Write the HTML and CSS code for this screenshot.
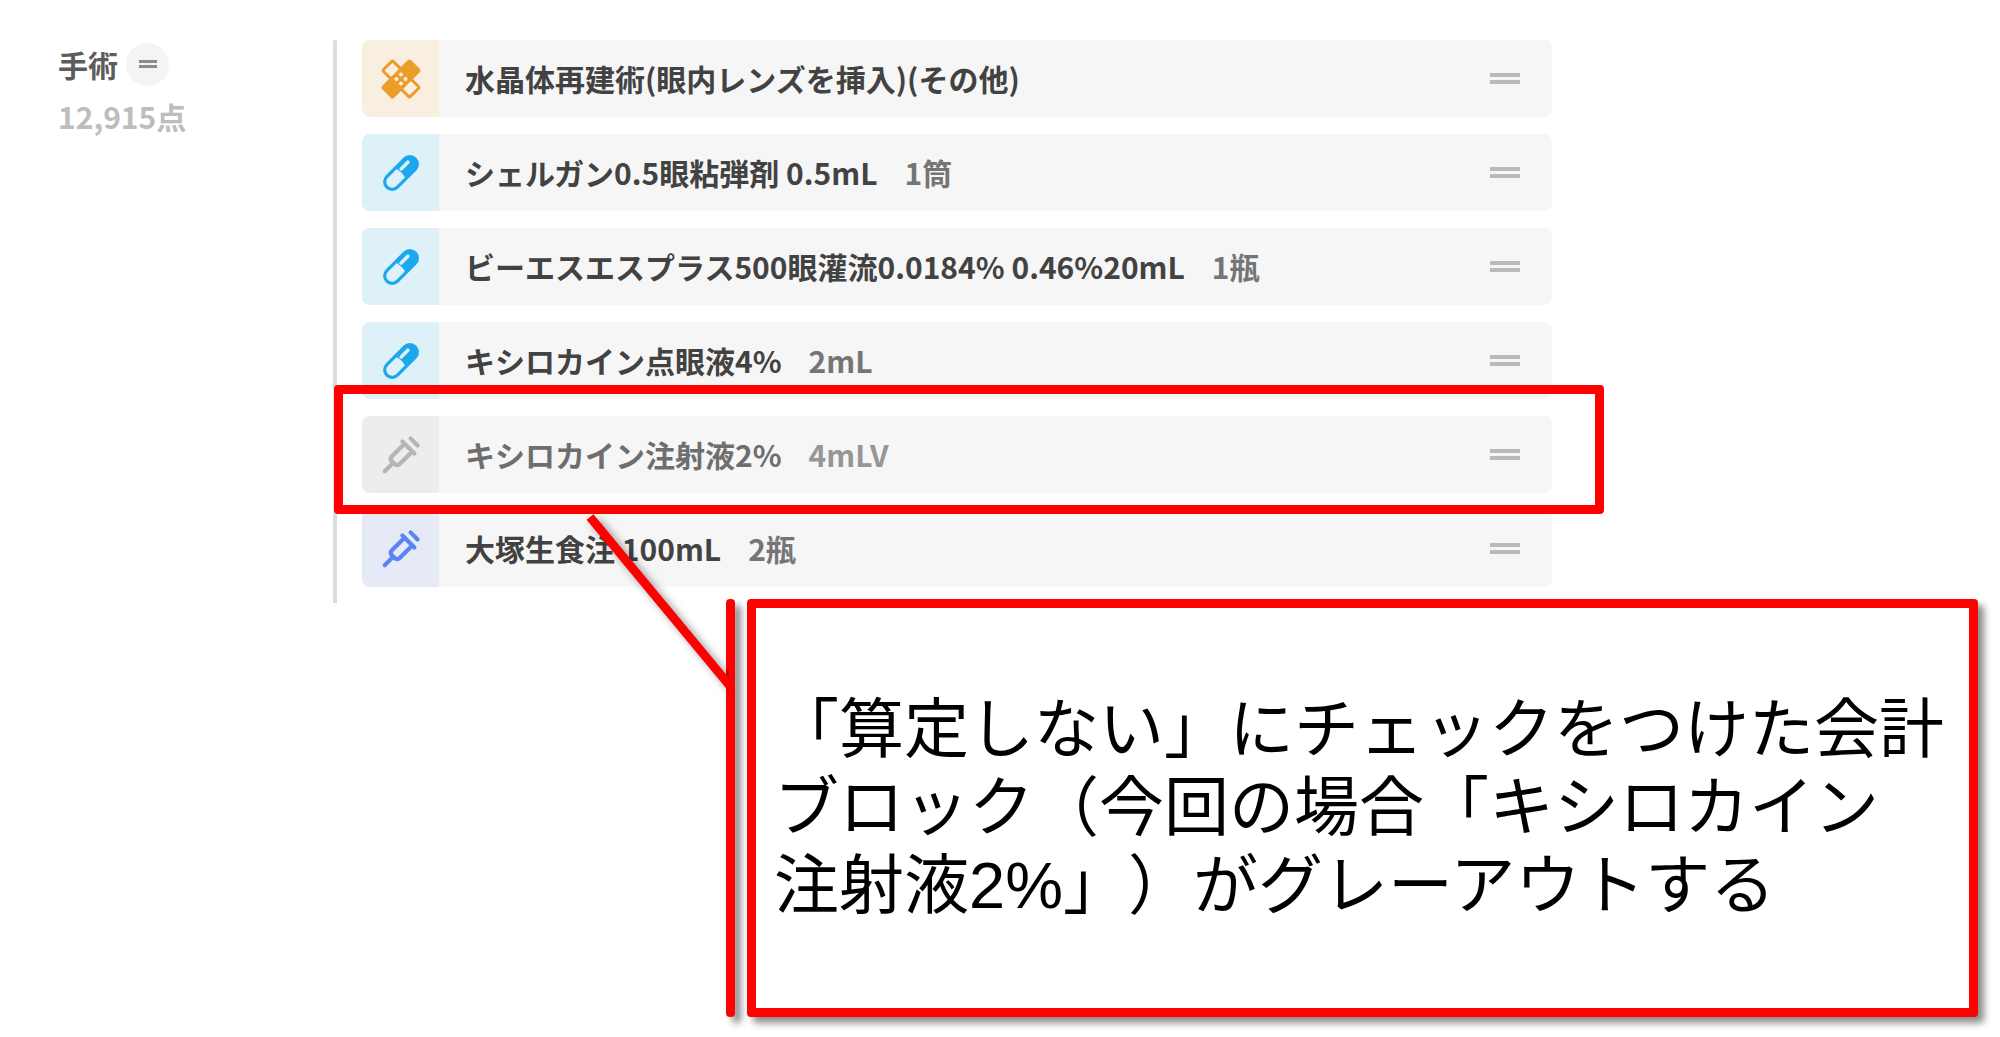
FILE: index.html
```
<!DOCTYPE html>
<html lang="ja">
<head>
<meta charset="utf-8">
<meta name="viewport" content="width=device-width, initial-scale=1">
<title>手術</title>
<link rel="stylesheet" href="styles.css">
</head>
<body>
<svg class="symbols" aria-hidden="true">
  <symbol id="icon-bandage" viewBox="-24 -24 48 48">
    <g transform="rotate(45)">
      <rect x="-19" y="-7" width="38" height="14" rx="1" fill="none" stroke="currentColor" stroke-width="3"/>
      <rect x="-8.500" y="-20.500" width="17" height="41" rx="2.500" fill="currentColor"/>
    </g>
    <g fill="#f8efe0">
      <circle cx="0" cy="-4.500" r="2"/>
      <circle cx="0" cy="4.500" r="2"/>
      <circle cx="-4.500" cy="0" r="2"/>
      <circle cx="4.500" cy="0" r="2"/>
    </g>
  </symbol>
  <symbol id="icon-pill" viewBox="-24 -24 48 48">
    <g transform="rotate(-45)">
      <rect x="-20" y="-7.500" width="40" height="15" rx="7.500" fill="none" stroke="currentColor" stroke-width="3.200"/>
      <path d="M-1 -8Q2 0 -1 8H12.500A8 8 0 0 0 12.500 -8Z" fill="currentColor"/>
      <path d="M3 -2.800H12.500" fill="none" stroke="#def0f8" stroke-width="3.600" stroke-linecap="round"/>
    </g>
  </symbol>
  <symbol id="icon-syringe" viewBox="-24 -24 48 48">
    <g transform="rotate(-45)" fill="none" stroke="currentColor" stroke-width="4.200" stroke-linecap="round">
      <path d="M10.500 -5.500H-7Q-11 -5.500 -11 -1.500V1.500Q-11 5.500 -7 5.500H10.500"/>
      <path d="M10.500 -8.500V8.500"/>
      <path d="M18.500 -5V5"/>
      <path d="M-11 0H-23"/>
    </g>
  </symbol>
</svg>

<main class="page">
  <section class="record">
    <header class="summary">
      <div class="summary-head">
        <h1 class="summary-title">手術</h1>
        <button class="round-handle" type="button" aria-label="並べ替え"><span class="bars bars-small"></span></button>
      </div>
      <p class="points">12,915点</p>
    </header>

    <ul class="items">
      <li class="item">
        <span class="tile tile-procedure"><svg class="icon"><use href="#icon-bandage"/></svg></span>
        <span class="name">水晶体再建術(眼内レンズを挿入)(その他)</span>
        <button class="handle" type="button" aria-label="並べ替え"><span class="bars"></span></button>
      </li>
      <li class="item">
        <span class="tile tile-drug"><svg class="icon"><use href="#icon-pill"/></svg></span>
        <span class="name">シェルガン0.5眼粘弾剤 0.5mL</span>
        <span class="amount">1筒</span>
        <button class="handle" type="button" aria-label="並べ替え"><span class="bars"></span></button>
      </li>
      <li class="item">
        <span class="tile tile-drug"><svg class="icon"><use href="#icon-pill"/></svg></span>
        <span class="name">ビーエスエスプラス500眼灌流0.0184% 0.46%20mL</span>
        <span class="amount">1瓶</span>
        <button class="handle" type="button" aria-label="並べ替え"><span class="bars"></span></button>
      </li>
      <li class="item">
        <span class="tile tile-drug"><svg class="icon"><use href="#icon-pill"/></svg></span>
        <span class="name">キシロカイン点眼液4%</span>
        <span class="amount">2mL</span>
        <button class="handle" type="button" aria-label="並べ替え"><span class="bars"></span></button>
      </li>
      <li class="item item-excluded">
        <span class="tile tile-excluded"><svg class="icon"><use href="#icon-syringe"/></svg></span>
        <span class="name">キシロカイン注射液2%</span>
        <span class="amount">4mLV</span>
        <button class="handle" type="button" aria-label="並べ替え"><span class="bars"></span></button>
      </li>
      <li class="item">
        <span class="tile tile-injection"><svg class="icon"><use href="#icon-syringe"/></svg></span>
        <span class="name">大塚生食注 100mL</span>
        <span class="amount">2瓶</span>
        <button class="handle" type="button" aria-label="並べ替え"><span class="bars"></span></button>
      </li>
    </ul>
  </section>

  <aside class="callout">
    <svg class="pointer" viewBox="0 0 160 200" aria-hidden="true">
      <path d="M10 14L150 183" fill="none" stroke="#f00" stroke-width="9"/>
    </svg>
    <span class="callout-rule"></span>
    <p class="callout-text">「算定しない」にチェックをつけた会計<br>ブロック（今回の場合「キシロカイン<br>注射液2%」）がグレーアウトする</p>
  </aside>
</main>
</body>
</html>
```
FILE: styles.css
```
* {
  box-sizing: border-box;
}

body {
  margin: 0;
  background: #fff;
  font-family: "Noto Sans CJK JP", sans-serif;
}

h1,
p,
ul {
  margin: 0;
  padding: 0;
}

button {
  display: flex;
  align-items: center;
  justify-content: center;
  padding: 0;
  border: 0;
  background: none;
  cursor: grab;
}

.symbols {
  display: none;
}

.page {
  padding: 40px 22px 20px 58px;
}

.record {
  display: flex;
  font-size: 30px;
  font-weight: 700;
  line-height: 44px;
}

/* Section heading and total */
.summary {
  flex: 0 0 275px;
  padding-top: 2px;
}

.summary-head {
  display: flex;
  align-items: center;
  gap: 8px;
}

.summary-title {
  color: #5c5c5c;
  font-size: 30px;
  line-height: 44px;
}

.round-handle {
  width: 43px;
  height: 43px;
  border-radius: 50%;
  background: #f4f4f4;
}

.points {
  margin-top: 8px;
  color: #bdbdbd;
}

/* Two-line drag handle */
.bars {
  width: 30px;
  height: 11px;
  border: solid #bababa;
  border-width: 4px 0;
}

.bars-small {
  width: 18px;
  height: 8px;
  border-color: #8c8c8c;
  border-width: 3px 0;
}

/* Item list */
.items {
  display: flex;
  flex: 1;
  flex-direction: column;
  gap: 17px;
  max-width: 1219px;
  padding: 0 0 16px 25px;
  border-left: 4px solid #dcdcdc;
  border-top-left-radius: 2px;
  list-style: none;
}

.item {
  position: relative;
  display: flex;
  align-items: center;
  height: 77px;
  border-radius: 8px;
  background: #f6f6f6;
  color: #424242;
}

.name,
.amount {
  padding-bottom: 2px;
}

.tile {
  display: flex;
  align-items: center;
  justify-content: center;
  width: 77px;
  height: 77px;
  margin-right: 26px;
  border-radius: 8px 0 0 8px;
}

.tile-procedure {
  background: #f8efe0;
  color: #eb9d2c;
}

.tile-drug {
  background: #def0f8;
  color: #1ba8ee;
}

.tile-injection {
  background: #e6eaf7;
  color: #5b84f5;
}

.tile-excluded {
  background: #ededed;
  color: #b5b5b5;
}

.icon {
  width: 48px;
  height: 48px;
}

.amount {
  margin-left: 27px;
  color: #757575;
}

.handle {
  width: 46px;
  height: 44px;
  margin-right: 24px;
  margin-left: auto;
}

.item-excluded {
  color: #6e6e6e;
}

.item-excluded .amount {
  color: #969696;
}

.item-excluded::after {
  position: absolute;
  z-index: 1;
  inset: -31px -52px -21px -28px;
  border: 9px solid #f00;
  border-radius: 4px;
  content: "";
  pointer-events: none;
}

/* Explanation box */
.callout {
  position: relative;
  display: flex;
  gap: 12px;
  max-width: 1252px;
  min-height: 418px;
  margin: -4px 0 0 auto;
}

.pointer {
  position: absolute;
  z-index: 2;
  top: -96px;
  left: -146px;
  width: 160px;
  height: 200px;
  filter: drop-shadow(5px 4px 4px rgba(0, 0, 0, 0.4));
  clip-path: inset(0 11px 0 0);
}

.callout-rule {
  flex: 0 0 9px;
  border-radius: 4px;
  background: #f00;
  box-shadow: 6px 6px 7px rgba(0, 0, 0, 0.45);
}

.callout-text {
  flex: 1;
  align-content: center;
  padding: 0 18px;
  border: 9px solid #f00;
  border-radius: 4px;
  background: #fff;
  box-shadow: 6px 6px 7px rgba(0, 0, 0, 0.45);
  color: #000;
  font-family: "Liberation Sans", "Noto Sans CJK JP", sans-serif;
  font-size: 65px;
  line-height: 78px;
  text-spacing-trim: space-all;
  white-space: nowrap;
}
```
